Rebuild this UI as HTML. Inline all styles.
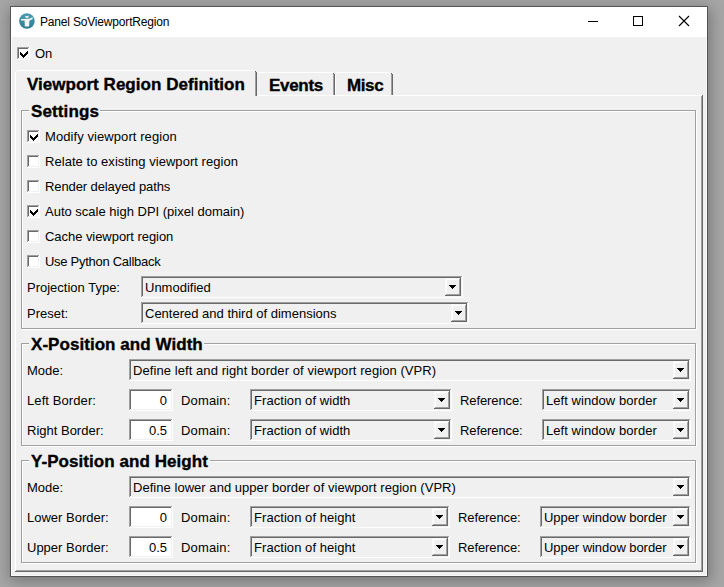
<!DOCTYPE html><html><head><meta charset="utf-8"><style>
html,body{margin:0;padding:0;}
body{width:724px;height:587px;overflow:hidden;position:relative;background:#9e9e9e;font-family:"Liberation Sans", sans-serif;}
div,svg{position:absolute;}
.t{font-family:"Liberation Sans", sans-serif;font-size:13px;line-height:15px;color:#000;white-space:nowrap;}
</style></head><body>
<div style="left:0;top:0;width:724px;height:587px;background:#a6a6a6"></div>
<div style="left:10px;top:6px;width:696px;height:569px;border:1px solid #535353;background:#fff;box-shadow:1px 3px 14px 1px rgba(0,0,0,0.30)"></div>
<div style="left:12px;top:37px;width:694px;height:538px;background:#f0f0f0"></div>
<div style="left:706px;top:37px;width:1px;height:539px;background:#f8f8f8"></div>
<div style="left:11px;top:575px;width:696px;height:1px;background:#f8f8f8"></div>
<svg style="left:18px;top:12px" width="18" height="18" viewBox="0 0 18 18">
<defs><linearGradient id="ig" x1="0" y1="0" x2="0" y2="1"><stop offset="0" stop-color="#4a9db4"/><stop offset="1" stop-color="#2e7b93"/></linearGradient></defs>
<circle cx="8.9" cy="9" r="7.8" fill="url(#ig)"/>
<path d="M7.1 3.7 Q9 4.7 10.9 3.6 Q10.9 6.1 9 6.1 Q7.1 6.1 7.1 3.7 Z" fill="#f6f6f6"/>
<path d="M3.1 6.9 L11.2 6.8 L14.5 5.3 L14.7 7.0 L11.3 8.7 L6.6 8.4 L3.1 8.4 Z" fill="#f6f6f6"/>
<path d="M6.6 7.4 L11.35 7.4 L11.15 14.2 Q9 14.6 6.8 14.2 Z" fill="#f6f6f6"/>
</svg>
<div class="t" style="left:40px;top:15px;font-size:13px;line-height:15px;font-size:12px;letter-spacing:-0.18px;">Panel SoViewportRegion</div>
<div style="left:588px;top:21px;width:10px;height:1px;background:#000"></div>
<div style="left:633px;top:16px;width:8px;height:8px;border:1px solid #000"></div>
<svg style="left:678px;top:15px" width="12" height="12" viewBox="0 0 12 12"><path d="M1 1 L11 11 M11 1 L1 11" stroke="#000" stroke-width="1.1"/></svg>
<div style="left:17px;top:47px;width:13px;height:13px;background:#ffffff"></div>
<div style="left:17px;top:47px;width:13px;height:1px;background:#a0a0a0"></div>
<div style="left:17px;top:47px;width:1px;height:13px;background:#a0a0a0"></div>
<div style="left:18px;top:48px;width:11px;height:1px;background:#696969"></div>
<div style="left:18px;top:48px;width:1px;height:11px;background:#696969"></div>
<div style="left:17px;top:59px;width:13px;height:1px;background:#ffffff"></div>
<div style="left:29px;top:47px;width:1px;height:13px;background:#ffffff"></div>
<div style="left:18px;top:58px;width:11px;height:1px;background:#f0f0f0"></div>
<div style="left:28px;top:48px;width:1px;height:11px;background:#f0f0f0"></div>
<div style="left:20px;top:52px;width:1px;height:3px;background:#000"></div>
<div style="left:21px;top:53px;width:1px;height:3px;background:#000"></div>
<div style="left:22px;top:54px;width:1px;height:3px;background:#000"></div>
<div style="left:23px;top:55px;width:1px;height:3px;background:#000"></div>
<div style="left:24px;top:54px;width:1px;height:3px;background:#000"></div>
<div style="left:25px;top:53px;width:1px;height:3px;background:#000"></div>
<div style="left:26px;top:52px;width:1px;height:3px;background:#000"></div>
<div style="left:27px;top:51px;width:1px;height:3px;background:#000"></div>
<div class="t" style="left:35px;top:46px;font-size:13px;line-height:15px;">On</div>
<div style="left:15px;top:95px;width:688px;height:477px;background:#f0f0f0"></div>
<div style="left:15px;top:95px;width:1px;height:477px;background:#ffffff"></div>
<div style="left:257px;top:95px;width:445px;height:1px;background:#ffffff"></div>
<div style="left:701px;top:96px;width:1px;height:475px;background:#a0a0a0"></div>
<div style="left:702px;top:95px;width:1px;height:477px;background:#696969"></div>
<div style="left:16px;top:570px;width:686px;height:1px;background:#a0a0a0"></div>
<div style="left:15px;top:571px;width:688px;height:1px;background:#696969"></div>
<div style="left:15px;top:72px;width:1px;height:24px;background:#ffffff"></div>
<div style="left:16px;top:71px;width:1px;height:1px;background:#ffffff"></div>
<div style="left:17px;top:70px;width:238px;height:1px;background:#ffffff"></div>
<div style="left:255px;top:71px;width:1px;height:1px;background:#696969"></div>
<div style="left:255px;top:72px;width:1px;height:24px;background:#a0a0a0"></div>
<div style="left:256px;top:72px;width:1px;height:24px;background:#696969"></div>
<div class="t" style="left:27px;top:75px;font-size:17px;line-height:20px;font-weight:bold;-webkit-text-stroke:0.35px #000;letter-spacing:0.04px;">Viewport Region Definition</div>
<div style="left:257px;top:72px;width:76px;height:1px;background:#ffffff"></div>
<div style="left:333px;top:73px;width:1px;height:1px;background:#696969"></div>
<div style="left:333px;top:74px;width:1px;height:21px;background:#a0a0a0"></div>
<div style="left:334px;top:74px;width:1px;height:21px;background:#696969"></div>
<div class="t" style="left:269px;top:76px;font-size:17px;line-height:20px;font-weight:bold;-webkit-text-stroke:0.35px #000;letter-spacing:-0.3px;">Events</div>
<div style="left:335px;top:74px;width:1px;height:21px;background:#ffffff"></div>
<div style="left:336px;top:73px;width:1px;height:1px;background:#ffffff"></div>
<div style="left:337px;top:72px;width:54px;height:1px;background:#ffffff"></div>
<div style="left:391px;top:73px;width:1px;height:1px;background:#696969"></div>
<div style="left:391px;top:74px;width:1px;height:21px;background:#a0a0a0"></div>
<div style="left:392px;top:74px;width:1px;height:21px;background:#696969"></div>
<div class="t" style="left:347px;top:76px;font-size:17px;line-height:20px;font-weight:bold;-webkit-text-stroke:0.35px #000;letter-spacing:-0.4px;">Misc</div>
<div style="left:22px;top:111px;width:674px;height:218px;border:1px solid #fff;box-sizing:border-box;width:675px;height:219px"></div>
<div style="left:21px;top:110px;width:675px;height:219px;border:1px solid #a0a0a0;box-sizing:border-box"></div>
<div style="left:29px;top:109px;width:71px;height:3px;background:#f0f0f0"></div>
<div class="t" style="left:31px;top:102px;font-size:17px;line-height:20px;font-weight:bold;-webkit-text-stroke:0.35px #000;letter-spacing:0.12px;">Settings</div>
<div style="left:27px;top:130px;width:13px;height:13px;background:#ffffff"></div>
<div style="left:27px;top:130px;width:13px;height:1px;background:#a0a0a0"></div>
<div style="left:27px;top:130px;width:1px;height:13px;background:#a0a0a0"></div>
<div style="left:28px;top:131px;width:11px;height:1px;background:#696969"></div>
<div style="left:28px;top:131px;width:1px;height:11px;background:#696969"></div>
<div style="left:27px;top:142px;width:13px;height:1px;background:#ffffff"></div>
<div style="left:39px;top:130px;width:1px;height:13px;background:#ffffff"></div>
<div style="left:28px;top:141px;width:11px;height:1px;background:#f0f0f0"></div>
<div style="left:38px;top:131px;width:1px;height:11px;background:#f0f0f0"></div>
<div style="left:30px;top:135px;width:1px;height:3px;background:#000"></div>
<div style="left:31px;top:136px;width:1px;height:3px;background:#000"></div>
<div style="left:32px;top:137px;width:1px;height:3px;background:#000"></div>
<div style="left:33px;top:138px;width:1px;height:3px;background:#000"></div>
<div style="left:34px;top:137px;width:1px;height:3px;background:#000"></div>
<div style="left:35px;top:136px;width:1px;height:3px;background:#000"></div>
<div style="left:36px;top:135px;width:1px;height:3px;background:#000"></div>
<div style="left:37px;top:134px;width:1px;height:3px;background:#000"></div>
<div class="t" style="left:45px;top:129px;font-size:13px;line-height:15px;letter-spacing:0.08px;">Modify viewport region</div>
<div style="left:27px;top:155px;width:13px;height:13px;background:#ffffff"></div>
<div style="left:27px;top:155px;width:13px;height:1px;background:#a0a0a0"></div>
<div style="left:27px;top:155px;width:1px;height:13px;background:#a0a0a0"></div>
<div style="left:28px;top:156px;width:11px;height:1px;background:#696969"></div>
<div style="left:28px;top:156px;width:1px;height:11px;background:#696969"></div>
<div style="left:27px;top:167px;width:13px;height:1px;background:#ffffff"></div>
<div style="left:39px;top:155px;width:1px;height:13px;background:#ffffff"></div>
<div style="left:28px;top:166px;width:11px;height:1px;background:#f0f0f0"></div>
<div style="left:38px;top:156px;width:1px;height:11px;background:#f0f0f0"></div>
<div class="t" style="left:45px;top:154px;font-size:13px;line-height:15px;letter-spacing:0.045px;">Relate to existing viewport region</div>
<div style="left:27px;top:180px;width:13px;height:13px;background:#ffffff"></div>
<div style="left:27px;top:180px;width:13px;height:1px;background:#a0a0a0"></div>
<div style="left:27px;top:180px;width:1px;height:13px;background:#a0a0a0"></div>
<div style="left:28px;top:181px;width:11px;height:1px;background:#696969"></div>
<div style="left:28px;top:181px;width:1px;height:11px;background:#696969"></div>
<div style="left:27px;top:192px;width:13px;height:1px;background:#ffffff"></div>
<div style="left:39px;top:180px;width:1px;height:13px;background:#ffffff"></div>
<div style="left:28px;top:191px;width:11px;height:1px;background:#f0f0f0"></div>
<div style="left:38px;top:181px;width:1px;height:11px;background:#f0f0f0"></div>
<div class="t" style="left:45px;top:179px;font-size:13px;line-height:15px;letter-spacing:-0.1px;">Render delayed paths</div>
<div style="left:27px;top:205px;width:13px;height:13px;background:#ffffff"></div>
<div style="left:27px;top:205px;width:13px;height:1px;background:#a0a0a0"></div>
<div style="left:27px;top:205px;width:1px;height:13px;background:#a0a0a0"></div>
<div style="left:28px;top:206px;width:11px;height:1px;background:#696969"></div>
<div style="left:28px;top:206px;width:1px;height:11px;background:#696969"></div>
<div style="left:27px;top:217px;width:13px;height:1px;background:#ffffff"></div>
<div style="left:39px;top:205px;width:1px;height:13px;background:#ffffff"></div>
<div style="left:28px;top:216px;width:11px;height:1px;background:#f0f0f0"></div>
<div style="left:38px;top:206px;width:1px;height:11px;background:#f0f0f0"></div>
<div style="left:30px;top:210px;width:1px;height:3px;background:#000"></div>
<div style="left:31px;top:211px;width:1px;height:3px;background:#000"></div>
<div style="left:32px;top:212px;width:1px;height:3px;background:#000"></div>
<div style="left:33px;top:213px;width:1px;height:3px;background:#000"></div>
<div style="left:34px;top:212px;width:1px;height:3px;background:#000"></div>
<div style="left:35px;top:211px;width:1px;height:3px;background:#000"></div>
<div style="left:36px;top:210px;width:1px;height:3px;background:#000"></div>
<div style="left:37px;top:209px;width:1px;height:3px;background:#000"></div>
<div class="t" style="left:45px;top:204px;font-size:13px;line-height:15px;">Auto scale high DPI (pixel domain)</div>
<div style="left:27px;top:230px;width:13px;height:13px;background:#ffffff"></div>
<div style="left:27px;top:230px;width:13px;height:1px;background:#a0a0a0"></div>
<div style="left:27px;top:230px;width:1px;height:13px;background:#a0a0a0"></div>
<div style="left:28px;top:231px;width:11px;height:1px;background:#696969"></div>
<div style="left:28px;top:231px;width:1px;height:11px;background:#696969"></div>
<div style="left:27px;top:242px;width:13px;height:1px;background:#ffffff"></div>
<div style="left:39px;top:230px;width:1px;height:13px;background:#ffffff"></div>
<div style="left:28px;top:241px;width:11px;height:1px;background:#f0f0f0"></div>
<div style="left:38px;top:231px;width:1px;height:11px;background:#f0f0f0"></div>
<div class="t" style="left:45px;top:229px;font-size:13px;line-height:15px;letter-spacing:-0.05px;">Cache viewport region</div>
<div style="left:27px;top:255px;width:13px;height:13px;background:#ffffff"></div>
<div style="left:27px;top:255px;width:13px;height:1px;background:#a0a0a0"></div>
<div style="left:27px;top:255px;width:1px;height:13px;background:#a0a0a0"></div>
<div style="left:28px;top:256px;width:11px;height:1px;background:#696969"></div>
<div style="left:28px;top:256px;width:1px;height:11px;background:#696969"></div>
<div style="left:27px;top:267px;width:13px;height:1px;background:#ffffff"></div>
<div style="left:39px;top:255px;width:1px;height:13px;background:#ffffff"></div>
<div style="left:28px;top:266px;width:11px;height:1px;background:#f0f0f0"></div>
<div style="left:38px;top:256px;width:1px;height:11px;background:#f0f0f0"></div>
<div class="t" style="left:45px;top:254px;font-size:13px;line-height:15px;letter-spacing:-0.28px;">Use Python Callback</div>
<div class="t" style="left:27px;top:280px;font-size:13px;line-height:15px;">Projection Type:</div>
<div style="left:141px;top:276px;width:322px;height:22px;background:#f0f0f0"></div>
<div style="left:141px;top:276px;width:322px;height:1px;background:#a0a0a0"></div>
<div style="left:141px;top:276px;width:1px;height:22px;background:#a0a0a0"></div>
<div style="left:142px;top:277px;width:320px;height:1px;background:#696969"></div>
<div style="left:142px;top:277px;width:1px;height:20px;background:#696969"></div>
<div style="left:141px;top:297px;width:322px;height:1px;background:#ffffff"></div>
<div style="left:462px;top:276px;width:1px;height:22px;background:#ffffff"></div>
<div style="left:142px;top:296px;width:320px;height:1px;background:#f0f0f0"></div>
<div style="left:461px;top:277px;width:1px;height:20px;background:#f0f0f0"></div>
<div style="left:445px;top:278px;width:16px;height:18px;background:#f0f0f0"></div>
<div style="left:445px;top:278px;width:16px;height:1px;background:#f8f8f8"></div>
<div style="left:445px;top:278px;width:1px;height:18px;background:#f8f8f8"></div>
<div style="left:446px;top:279px;width:14px;height:1px;background:#ffffff"></div>
<div style="left:446px;top:279px;width:1px;height:16px;background:#ffffff"></div>
<div style="left:445px;top:295px;width:16px;height:1px;background:#696969"></div>
<div style="left:460px;top:278px;width:1px;height:18px;background:#696969"></div>
<div style="left:446px;top:294px;width:14px;height:1px;background:#a0a0a0"></div>
<div style="left:459px;top:279px;width:1px;height:16px;background:#a0a0a0"></div>
<div style="left:449px;top:285px;width:7px;height:1px;background:#000"></div>
<div style="left:450px;top:286px;width:5px;height:1px;background:#000"></div>
<div style="left:451px;top:287px;width:3px;height:1px;background:#000"></div>
<div style="left:452px;top:288px;width:1px;height:1px;background:#000"></div>
<div class="t" style="left:145px;top:280px;font-size:13px;line-height:15px;">Unmodified</div>
<div class="t" style="left:27px;top:306px;font-size:13px;line-height:15px;">Preset:</div>
<div style="left:141px;top:302px;width:328px;height:22px;background:#f0f0f0"></div>
<div style="left:141px;top:302px;width:328px;height:1px;background:#a0a0a0"></div>
<div style="left:141px;top:302px;width:1px;height:22px;background:#a0a0a0"></div>
<div style="left:142px;top:303px;width:326px;height:1px;background:#696969"></div>
<div style="left:142px;top:303px;width:1px;height:20px;background:#696969"></div>
<div style="left:141px;top:323px;width:328px;height:1px;background:#ffffff"></div>
<div style="left:468px;top:302px;width:1px;height:22px;background:#ffffff"></div>
<div style="left:142px;top:322px;width:326px;height:1px;background:#f0f0f0"></div>
<div style="left:467px;top:303px;width:1px;height:20px;background:#f0f0f0"></div>
<div style="left:451px;top:304px;width:16px;height:18px;background:#f0f0f0"></div>
<div style="left:451px;top:304px;width:16px;height:1px;background:#f8f8f8"></div>
<div style="left:451px;top:304px;width:1px;height:18px;background:#f8f8f8"></div>
<div style="left:452px;top:305px;width:14px;height:1px;background:#ffffff"></div>
<div style="left:452px;top:305px;width:1px;height:16px;background:#ffffff"></div>
<div style="left:451px;top:321px;width:16px;height:1px;background:#696969"></div>
<div style="left:466px;top:304px;width:1px;height:18px;background:#696969"></div>
<div style="left:452px;top:320px;width:14px;height:1px;background:#a0a0a0"></div>
<div style="left:465px;top:305px;width:1px;height:16px;background:#a0a0a0"></div>
<div style="left:455px;top:311px;width:7px;height:1px;background:#000"></div>
<div style="left:456px;top:312px;width:5px;height:1px;background:#000"></div>
<div style="left:457px;top:313px;width:3px;height:1px;background:#000"></div>
<div style="left:458px;top:314px;width:1px;height:1px;background:#000"></div>
<div class="t" style="left:145px;top:306px;font-size:13px;line-height:15px;">Centered and third of dimensions</div>
<div style="left:22px;top:344px;width:674px;height:102px;border:1px solid #fff;box-sizing:border-box;width:675px;height:103px"></div>
<div style="left:21px;top:343px;width:675px;height:103px;border:1px solid #a0a0a0;box-sizing:border-box"></div>
<div style="left:29px;top:342px;width:175px;height:3px;background:#f0f0f0"></div>
<div class="t" style="left:31px;top:335px;font-size:17px;line-height:20px;font-weight:bold;-webkit-text-stroke:0.35px #000;letter-spacing:0.05px;">X-Position and Width</div>
<div class="t" style="left:27px;top:363px;font-size:13px;line-height:15px;">Mode:</div>
<div style="left:129px;top:359px;width:562px;height:22px;background:#f0f0f0"></div>
<div style="left:129px;top:359px;width:562px;height:1px;background:#a0a0a0"></div>
<div style="left:129px;top:359px;width:1px;height:22px;background:#a0a0a0"></div>
<div style="left:130px;top:360px;width:560px;height:1px;background:#696969"></div>
<div style="left:130px;top:360px;width:1px;height:20px;background:#696969"></div>
<div style="left:129px;top:380px;width:562px;height:1px;background:#ffffff"></div>
<div style="left:690px;top:359px;width:1px;height:22px;background:#ffffff"></div>
<div style="left:130px;top:379px;width:560px;height:1px;background:#f0f0f0"></div>
<div style="left:689px;top:360px;width:1px;height:20px;background:#f0f0f0"></div>
<div style="left:673px;top:361px;width:16px;height:18px;background:#f0f0f0"></div>
<div style="left:673px;top:361px;width:16px;height:1px;background:#f8f8f8"></div>
<div style="left:673px;top:361px;width:1px;height:18px;background:#f8f8f8"></div>
<div style="left:674px;top:362px;width:14px;height:1px;background:#ffffff"></div>
<div style="left:674px;top:362px;width:1px;height:16px;background:#ffffff"></div>
<div style="left:673px;top:378px;width:16px;height:1px;background:#696969"></div>
<div style="left:688px;top:361px;width:1px;height:18px;background:#696969"></div>
<div style="left:674px;top:377px;width:14px;height:1px;background:#a0a0a0"></div>
<div style="left:687px;top:362px;width:1px;height:16px;background:#a0a0a0"></div>
<div style="left:677px;top:368px;width:7px;height:1px;background:#000"></div>
<div style="left:678px;top:369px;width:5px;height:1px;background:#000"></div>
<div style="left:679px;top:370px;width:3px;height:1px;background:#000"></div>
<div style="left:680px;top:371px;width:1px;height:1px;background:#000"></div>
<div class="t" style="left:133px;top:363px;font-size:13px;line-height:15px;letter-spacing:0.077px;">Define left and right border of viewport region (VPR)</div>
<div class="t" style="left:27px;top:393px;font-size:13px;line-height:15px;letter-spacing:0.09px;">Left Border:</div>
<div style="left:129px;top:389px;width:44px;height:22px;background:#ffffff"></div>
<div style="left:129px;top:389px;width:44px;height:1px;background:#a0a0a0"></div>
<div style="left:129px;top:389px;width:1px;height:22px;background:#a0a0a0"></div>
<div style="left:130px;top:390px;width:42px;height:1px;background:#696969"></div>
<div style="left:130px;top:390px;width:1px;height:20px;background:#696969"></div>
<div style="left:129px;top:410px;width:44px;height:1px;background:#ffffff"></div>
<div style="left:172px;top:389px;width:1px;height:22px;background:#ffffff"></div>
<div style="left:130px;top:409px;width:42px;height:1px;background:#f0f0f0"></div>
<div style="left:171px;top:390px;width:1px;height:20px;background:#f0f0f0"></div>
<div class="t" style="left:107px;width:60px;text-align:right;top:393px">0</div>
<div class="t" style="left:181px;top:393px;font-size:13px;line-height:15px;letter-spacing:0.15px;">Domain:</div>
<div style="left:250px;top:389px;width:202px;height:22px;background:#f0f0f0"></div>
<div style="left:250px;top:389px;width:202px;height:1px;background:#a0a0a0"></div>
<div style="left:250px;top:389px;width:1px;height:22px;background:#a0a0a0"></div>
<div style="left:251px;top:390px;width:200px;height:1px;background:#696969"></div>
<div style="left:251px;top:390px;width:1px;height:20px;background:#696969"></div>
<div style="left:250px;top:410px;width:202px;height:1px;background:#ffffff"></div>
<div style="left:451px;top:389px;width:1px;height:22px;background:#ffffff"></div>
<div style="left:251px;top:409px;width:200px;height:1px;background:#f0f0f0"></div>
<div style="left:450px;top:390px;width:1px;height:20px;background:#f0f0f0"></div>
<div style="left:434px;top:391px;width:16px;height:18px;background:#f0f0f0"></div>
<div style="left:434px;top:391px;width:16px;height:1px;background:#f8f8f8"></div>
<div style="left:434px;top:391px;width:1px;height:18px;background:#f8f8f8"></div>
<div style="left:435px;top:392px;width:14px;height:1px;background:#ffffff"></div>
<div style="left:435px;top:392px;width:1px;height:16px;background:#ffffff"></div>
<div style="left:434px;top:408px;width:16px;height:1px;background:#696969"></div>
<div style="left:449px;top:391px;width:1px;height:18px;background:#696969"></div>
<div style="left:435px;top:407px;width:14px;height:1px;background:#a0a0a0"></div>
<div style="left:448px;top:392px;width:1px;height:16px;background:#a0a0a0"></div>
<div style="left:438px;top:398px;width:7px;height:1px;background:#000"></div>
<div style="left:439px;top:399px;width:5px;height:1px;background:#000"></div>
<div style="left:440px;top:400px;width:3px;height:1px;background:#000"></div>
<div style="left:441px;top:401px;width:1px;height:1px;background:#000"></div>
<div class="t" style="left:254px;top:393px;font-size:13px;line-height:15px;letter-spacing:0.06px;">Fraction of width</div>
<div class="t" style="left:460px;top:393px;font-size:13px;line-height:15px;letter-spacing:-0.1px;">Reference:</div>
<div style="left:542px;top:389px;width:149px;height:22px;background:#f0f0f0"></div>
<div style="left:542px;top:389px;width:149px;height:1px;background:#a0a0a0"></div>
<div style="left:542px;top:389px;width:1px;height:22px;background:#a0a0a0"></div>
<div style="left:543px;top:390px;width:147px;height:1px;background:#696969"></div>
<div style="left:543px;top:390px;width:1px;height:20px;background:#696969"></div>
<div style="left:542px;top:410px;width:149px;height:1px;background:#ffffff"></div>
<div style="left:690px;top:389px;width:1px;height:22px;background:#ffffff"></div>
<div style="left:543px;top:409px;width:147px;height:1px;background:#f0f0f0"></div>
<div style="left:689px;top:390px;width:1px;height:20px;background:#f0f0f0"></div>
<div style="left:673px;top:391px;width:16px;height:18px;background:#f0f0f0"></div>
<div style="left:673px;top:391px;width:16px;height:1px;background:#f8f8f8"></div>
<div style="left:673px;top:391px;width:1px;height:18px;background:#f8f8f8"></div>
<div style="left:674px;top:392px;width:14px;height:1px;background:#ffffff"></div>
<div style="left:674px;top:392px;width:1px;height:16px;background:#ffffff"></div>
<div style="left:673px;top:408px;width:16px;height:1px;background:#696969"></div>
<div style="left:688px;top:391px;width:1px;height:18px;background:#696969"></div>
<div style="left:674px;top:407px;width:14px;height:1px;background:#a0a0a0"></div>
<div style="left:687px;top:392px;width:1px;height:16px;background:#a0a0a0"></div>
<div style="left:677px;top:398px;width:7px;height:1px;background:#000"></div>
<div style="left:678px;top:399px;width:5px;height:1px;background:#000"></div>
<div style="left:679px;top:400px;width:3px;height:1px;background:#000"></div>
<div style="left:680px;top:401px;width:1px;height:1px;background:#000"></div>
<div class="t" style="left:546px;top:393px;font-size:13px;line-height:15px;letter-spacing:0.06px;">Left window border</div>
<div class="t" style="left:27px;top:423px;font-size:13px;line-height:15px;">Right Border:</div>
<div style="left:129px;top:419px;width:44px;height:22px;background:#ffffff"></div>
<div style="left:129px;top:419px;width:44px;height:1px;background:#a0a0a0"></div>
<div style="left:129px;top:419px;width:1px;height:22px;background:#a0a0a0"></div>
<div style="left:130px;top:420px;width:42px;height:1px;background:#696969"></div>
<div style="left:130px;top:420px;width:1px;height:20px;background:#696969"></div>
<div style="left:129px;top:440px;width:44px;height:1px;background:#ffffff"></div>
<div style="left:172px;top:419px;width:1px;height:22px;background:#ffffff"></div>
<div style="left:130px;top:439px;width:42px;height:1px;background:#f0f0f0"></div>
<div style="left:171px;top:420px;width:1px;height:20px;background:#f0f0f0"></div>
<div class="t" style="left:107px;width:60px;text-align:right;top:423px">0.5</div>
<div class="t" style="left:181px;top:423px;font-size:13px;line-height:15px;letter-spacing:0.15px;">Domain:</div>
<div style="left:250px;top:419px;width:202px;height:22px;background:#f0f0f0"></div>
<div style="left:250px;top:419px;width:202px;height:1px;background:#a0a0a0"></div>
<div style="left:250px;top:419px;width:1px;height:22px;background:#a0a0a0"></div>
<div style="left:251px;top:420px;width:200px;height:1px;background:#696969"></div>
<div style="left:251px;top:420px;width:1px;height:20px;background:#696969"></div>
<div style="left:250px;top:440px;width:202px;height:1px;background:#ffffff"></div>
<div style="left:451px;top:419px;width:1px;height:22px;background:#ffffff"></div>
<div style="left:251px;top:439px;width:200px;height:1px;background:#f0f0f0"></div>
<div style="left:450px;top:420px;width:1px;height:20px;background:#f0f0f0"></div>
<div style="left:434px;top:421px;width:16px;height:18px;background:#f0f0f0"></div>
<div style="left:434px;top:421px;width:16px;height:1px;background:#f8f8f8"></div>
<div style="left:434px;top:421px;width:1px;height:18px;background:#f8f8f8"></div>
<div style="left:435px;top:422px;width:14px;height:1px;background:#ffffff"></div>
<div style="left:435px;top:422px;width:1px;height:16px;background:#ffffff"></div>
<div style="left:434px;top:438px;width:16px;height:1px;background:#696969"></div>
<div style="left:449px;top:421px;width:1px;height:18px;background:#696969"></div>
<div style="left:435px;top:437px;width:14px;height:1px;background:#a0a0a0"></div>
<div style="left:448px;top:422px;width:1px;height:16px;background:#a0a0a0"></div>
<div style="left:438px;top:428px;width:7px;height:1px;background:#000"></div>
<div style="left:439px;top:429px;width:5px;height:1px;background:#000"></div>
<div style="left:440px;top:430px;width:3px;height:1px;background:#000"></div>
<div style="left:441px;top:431px;width:1px;height:1px;background:#000"></div>
<div class="t" style="left:254px;top:423px;font-size:13px;line-height:15px;letter-spacing:0.06px;">Fraction of width</div>
<div class="t" style="left:460px;top:423px;font-size:13px;line-height:15px;letter-spacing:-0.1px;">Reference:</div>
<div style="left:542px;top:419px;width:149px;height:22px;background:#f0f0f0"></div>
<div style="left:542px;top:419px;width:149px;height:1px;background:#a0a0a0"></div>
<div style="left:542px;top:419px;width:1px;height:22px;background:#a0a0a0"></div>
<div style="left:543px;top:420px;width:147px;height:1px;background:#696969"></div>
<div style="left:543px;top:420px;width:1px;height:20px;background:#696969"></div>
<div style="left:542px;top:440px;width:149px;height:1px;background:#ffffff"></div>
<div style="left:690px;top:419px;width:1px;height:22px;background:#ffffff"></div>
<div style="left:543px;top:439px;width:147px;height:1px;background:#f0f0f0"></div>
<div style="left:689px;top:420px;width:1px;height:20px;background:#f0f0f0"></div>
<div style="left:673px;top:421px;width:16px;height:18px;background:#f0f0f0"></div>
<div style="left:673px;top:421px;width:16px;height:1px;background:#f8f8f8"></div>
<div style="left:673px;top:421px;width:1px;height:18px;background:#f8f8f8"></div>
<div style="left:674px;top:422px;width:14px;height:1px;background:#ffffff"></div>
<div style="left:674px;top:422px;width:1px;height:16px;background:#ffffff"></div>
<div style="left:673px;top:438px;width:16px;height:1px;background:#696969"></div>
<div style="left:688px;top:421px;width:1px;height:18px;background:#696969"></div>
<div style="left:674px;top:437px;width:14px;height:1px;background:#a0a0a0"></div>
<div style="left:687px;top:422px;width:1px;height:16px;background:#a0a0a0"></div>
<div style="left:677px;top:428px;width:7px;height:1px;background:#000"></div>
<div style="left:678px;top:429px;width:5px;height:1px;background:#000"></div>
<div style="left:679px;top:430px;width:3px;height:1px;background:#000"></div>
<div style="left:680px;top:431px;width:1px;height:1px;background:#000"></div>
<div class="t" style="left:546px;top:423px;font-size:13px;line-height:15px;letter-spacing:0.06px;">Left window border</div>
<div style="left:22px;top:461px;width:674px;height:102px;border:1px solid #fff;box-sizing:border-box;width:675px;height:103px"></div>
<div style="left:21px;top:460px;width:675px;height:103px;border:1px solid #a0a0a0;box-sizing:border-box"></div>
<div style="left:29px;top:459px;width:181px;height:3px;background:#f0f0f0"></div>
<div class="t" style="left:31px;top:452px;font-size:17px;line-height:20px;font-weight:bold;-webkit-text-stroke:0.35px #000;letter-spacing:0.06px;">Y-Position and Height</div>
<div class="t" style="left:27px;top:480px;font-size:13px;line-height:15px;">Mode:</div>
<div style="left:129px;top:476px;width:562px;height:22px;background:#f0f0f0"></div>
<div style="left:129px;top:476px;width:562px;height:1px;background:#a0a0a0"></div>
<div style="left:129px;top:476px;width:1px;height:22px;background:#a0a0a0"></div>
<div style="left:130px;top:477px;width:560px;height:1px;background:#696969"></div>
<div style="left:130px;top:477px;width:1px;height:20px;background:#696969"></div>
<div style="left:129px;top:497px;width:562px;height:1px;background:#ffffff"></div>
<div style="left:690px;top:476px;width:1px;height:22px;background:#ffffff"></div>
<div style="left:130px;top:496px;width:560px;height:1px;background:#f0f0f0"></div>
<div style="left:689px;top:477px;width:1px;height:20px;background:#f0f0f0"></div>
<div style="left:673px;top:478px;width:16px;height:18px;background:#f0f0f0"></div>
<div style="left:673px;top:478px;width:16px;height:1px;background:#f8f8f8"></div>
<div style="left:673px;top:478px;width:1px;height:18px;background:#f8f8f8"></div>
<div style="left:674px;top:479px;width:14px;height:1px;background:#ffffff"></div>
<div style="left:674px;top:479px;width:1px;height:16px;background:#ffffff"></div>
<div style="left:673px;top:495px;width:16px;height:1px;background:#696969"></div>
<div style="left:688px;top:478px;width:1px;height:18px;background:#696969"></div>
<div style="left:674px;top:494px;width:14px;height:1px;background:#a0a0a0"></div>
<div style="left:687px;top:479px;width:1px;height:16px;background:#a0a0a0"></div>
<div style="left:677px;top:485px;width:7px;height:1px;background:#000"></div>
<div style="left:678px;top:486px;width:5px;height:1px;background:#000"></div>
<div style="left:679px;top:487px;width:3px;height:1px;background:#000"></div>
<div style="left:680px;top:488px;width:1px;height:1px;background:#000"></div>
<div class="t" style="left:133px;top:480px;font-size:13px;line-height:15px;letter-spacing:0.038px;">Define lower and upper border of viewport region (VPR)</div>
<div class="t" style="left:27px;top:510px;font-size:13px;line-height:15px;">Lower Border:</div>
<div style="left:129px;top:506px;width:44px;height:22px;background:#ffffff"></div>
<div style="left:129px;top:506px;width:44px;height:1px;background:#a0a0a0"></div>
<div style="left:129px;top:506px;width:1px;height:22px;background:#a0a0a0"></div>
<div style="left:130px;top:507px;width:42px;height:1px;background:#696969"></div>
<div style="left:130px;top:507px;width:1px;height:20px;background:#696969"></div>
<div style="left:129px;top:527px;width:44px;height:1px;background:#ffffff"></div>
<div style="left:172px;top:506px;width:1px;height:22px;background:#ffffff"></div>
<div style="left:130px;top:526px;width:42px;height:1px;background:#f0f0f0"></div>
<div style="left:171px;top:507px;width:1px;height:20px;background:#f0f0f0"></div>
<div class="t" style="left:107px;width:60px;text-align:right;top:510px">0</div>
<div class="t" style="left:181px;top:510px;font-size:13px;line-height:15px;letter-spacing:0.15px;">Domain:</div>
<div style="left:250px;top:506px;width:200px;height:22px;background:#f0f0f0"></div>
<div style="left:250px;top:506px;width:200px;height:1px;background:#a0a0a0"></div>
<div style="left:250px;top:506px;width:1px;height:22px;background:#a0a0a0"></div>
<div style="left:251px;top:507px;width:198px;height:1px;background:#696969"></div>
<div style="left:251px;top:507px;width:1px;height:20px;background:#696969"></div>
<div style="left:250px;top:527px;width:200px;height:1px;background:#ffffff"></div>
<div style="left:449px;top:506px;width:1px;height:22px;background:#ffffff"></div>
<div style="left:251px;top:526px;width:198px;height:1px;background:#f0f0f0"></div>
<div style="left:448px;top:507px;width:1px;height:20px;background:#f0f0f0"></div>
<div style="left:432px;top:508px;width:16px;height:18px;background:#f0f0f0"></div>
<div style="left:432px;top:508px;width:16px;height:1px;background:#f8f8f8"></div>
<div style="left:432px;top:508px;width:1px;height:18px;background:#f8f8f8"></div>
<div style="left:433px;top:509px;width:14px;height:1px;background:#ffffff"></div>
<div style="left:433px;top:509px;width:1px;height:16px;background:#ffffff"></div>
<div style="left:432px;top:525px;width:16px;height:1px;background:#696969"></div>
<div style="left:447px;top:508px;width:1px;height:18px;background:#696969"></div>
<div style="left:433px;top:524px;width:14px;height:1px;background:#a0a0a0"></div>
<div style="left:446px;top:509px;width:1px;height:16px;background:#a0a0a0"></div>
<div style="left:436px;top:515px;width:7px;height:1px;background:#000"></div>
<div style="left:437px;top:516px;width:5px;height:1px;background:#000"></div>
<div style="left:438px;top:517px;width:3px;height:1px;background:#000"></div>
<div style="left:439px;top:518px;width:1px;height:1px;background:#000"></div>
<div class="t" style="left:254px;top:510px;font-size:13px;line-height:15px;letter-spacing:0.06px;">Fraction of height</div>
<div class="t" style="left:458px;top:510px;font-size:13px;line-height:15px;letter-spacing:-0.1px;">Reference:</div>
<div style="left:540px;top:506px;width:151px;height:22px;background:#f0f0f0"></div>
<div style="left:540px;top:506px;width:151px;height:1px;background:#a0a0a0"></div>
<div style="left:540px;top:506px;width:1px;height:22px;background:#a0a0a0"></div>
<div style="left:541px;top:507px;width:149px;height:1px;background:#696969"></div>
<div style="left:541px;top:507px;width:1px;height:20px;background:#696969"></div>
<div style="left:540px;top:527px;width:151px;height:1px;background:#ffffff"></div>
<div style="left:690px;top:506px;width:1px;height:22px;background:#ffffff"></div>
<div style="left:541px;top:526px;width:149px;height:1px;background:#f0f0f0"></div>
<div style="left:689px;top:507px;width:1px;height:20px;background:#f0f0f0"></div>
<div style="left:673px;top:508px;width:16px;height:18px;background:#f0f0f0"></div>
<div style="left:673px;top:508px;width:16px;height:1px;background:#f8f8f8"></div>
<div style="left:673px;top:508px;width:1px;height:18px;background:#f8f8f8"></div>
<div style="left:674px;top:509px;width:14px;height:1px;background:#ffffff"></div>
<div style="left:674px;top:509px;width:1px;height:16px;background:#ffffff"></div>
<div style="left:673px;top:525px;width:16px;height:1px;background:#696969"></div>
<div style="left:688px;top:508px;width:1px;height:18px;background:#696969"></div>
<div style="left:674px;top:524px;width:14px;height:1px;background:#a0a0a0"></div>
<div style="left:687px;top:509px;width:1px;height:16px;background:#a0a0a0"></div>
<div style="left:677px;top:515px;width:7px;height:1px;background:#000"></div>
<div style="left:678px;top:516px;width:5px;height:1px;background:#000"></div>
<div style="left:679px;top:517px;width:3px;height:1px;background:#000"></div>
<div style="left:680px;top:518px;width:1px;height:1px;background:#000"></div>
<div class="t" style="left:544px;top:510px;font-size:13px;line-height:15px;letter-spacing:-0.055px;">Upper window border</div>
<div class="t" style="left:27px;top:540px;font-size:13px;line-height:15px;">Upper Border:</div>
<div style="left:129px;top:536px;width:44px;height:22px;background:#ffffff"></div>
<div style="left:129px;top:536px;width:44px;height:1px;background:#a0a0a0"></div>
<div style="left:129px;top:536px;width:1px;height:22px;background:#a0a0a0"></div>
<div style="left:130px;top:537px;width:42px;height:1px;background:#696969"></div>
<div style="left:130px;top:537px;width:1px;height:20px;background:#696969"></div>
<div style="left:129px;top:557px;width:44px;height:1px;background:#ffffff"></div>
<div style="left:172px;top:536px;width:1px;height:22px;background:#ffffff"></div>
<div style="left:130px;top:556px;width:42px;height:1px;background:#f0f0f0"></div>
<div style="left:171px;top:537px;width:1px;height:20px;background:#f0f0f0"></div>
<div class="t" style="left:107px;width:60px;text-align:right;top:540px">0.5</div>
<div class="t" style="left:181px;top:540px;font-size:13px;line-height:15px;letter-spacing:0.15px;">Domain:</div>
<div style="left:250px;top:536px;width:200px;height:22px;background:#f0f0f0"></div>
<div style="left:250px;top:536px;width:200px;height:1px;background:#a0a0a0"></div>
<div style="left:250px;top:536px;width:1px;height:22px;background:#a0a0a0"></div>
<div style="left:251px;top:537px;width:198px;height:1px;background:#696969"></div>
<div style="left:251px;top:537px;width:1px;height:20px;background:#696969"></div>
<div style="left:250px;top:557px;width:200px;height:1px;background:#ffffff"></div>
<div style="left:449px;top:536px;width:1px;height:22px;background:#ffffff"></div>
<div style="left:251px;top:556px;width:198px;height:1px;background:#f0f0f0"></div>
<div style="left:448px;top:537px;width:1px;height:20px;background:#f0f0f0"></div>
<div style="left:432px;top:538px;width:16px;height:18px;background:#f0f0f0"></div>
<div style="left:432px;top:538px;width:16px;height:1px;background:#f8f8f8"></div>
<div style="left:432px;top:538px;width:1px;height:18px;background:#f8f8f8"></div>
<div style="left:433px;top:539px;width:14px;height:1px;background:#ffffff"></div>
<div style="left:433px;top:539px;width:1px;height:16px;background:#ffffff"></div>
<div style="left:432px;top:555px;width:16px;height:1px;background:#696969"></div>
<div style="left:447px;top:538px;width:1px;height:18px;background:#696969"></div>
<div style="left:433px;top:554px;width:14px;height:1px;background:#a0a0a0"></div>
<div style="left:446px;top:539px;width:1px;height:16px;background:#a0a0a0"></div>
<div style="left:436px;top:545px;width:7px;height:1px;background:#000"></div>
<div style="left:437px;top:546px;width:5px;height:1px;background:#000"></div>
<div style="left:438px;top:547px;width:3px;height:1px;background:#000"></div>
<div style="left:439px;top:548px;width:1px;height:1px;background:#000"></div>
<div class="t" style="left:254px;top:540px;font-size:13px;line-height:15px;letter-spacing:0.06px;">Fraction of height</div>
<div class="t" style="left:458px;top:540px;font-size:13px;line-height:15px;letter-spacing:-0.1px;">Reference:</div>
<div style="left:540px;top:536px;width:151px;height:22px;background:#f0f0f0"></div>
<div style="left:540px;top:536px;width:151px;height:1px;background:#a0a0a0"></div>
<div style="left:540px;top:536px;width:1px;height:22px;background:#a0a0a0"></div>
<div style="left:541px;top:537px;width:149px;height:1px;background:#696969"></div>
<div style="left:541px;top:537px;width:1px;height:20px;background:#696969"></div>
<div style="left:540px;top:557px;width:151px;height:1px;background:#ffffff"></div>
<div style="left:690px;top:536px;width:1px;height:22px;background:#ffffff"></div>
<div style="left:541px;top:556px;width:149px;height:1px;background:#f0f0f0"></div>
<div style="left:689px;top:537px;width:1px;height:20px;background:#f0f0f0"></div>
<div style="left:673px;top:538px;width:16px;height:18px;background:#f0f0f0"></div>
<div style="left:673px;top:538px;width:16px;height:1px;background:#f8f8f8"></div>
<div style="left:673px;top:538px;width:1px;height:18px;background:#f8f8f8"></div>
<div style="left:674px;top:539px;width:14px;height:1px;background:#ffffff"></div>
<div style="left:674px;top:539px;width:1px;height:16px;background:#ffffff"></div>
<div style="left:673px;top:555px;width:16px;height:1px;background:#696969"></div>
<div style="left:688px;top:538px;width:1px;height:18px;background:#696969"></div>
<div style="left:674px;top:554px;width:14px;height:1px;background:#a0a0a0"></div>
<div style="left:687px;top:539px;width:1px;height:16px;background:#a0a0a0"></div>
<div style="left:677px;top:545px;width:7px;height:1px;background:#000"></div>
<div style="left:678px;top:546px;width:5px;height:1px;background:#000"></div>
<div style="left:679px;top:547px;width:3px;height:1px;background:#000"></div>
<div style="left:680px;top:548px;width:1px;height:1px;background:#000"></div>
<div class="t" style="left:544px;top:540px;font-size:13px;line-height:15px;letter-spacing:-0.055px;">Upper window border</div>
</body></html>
